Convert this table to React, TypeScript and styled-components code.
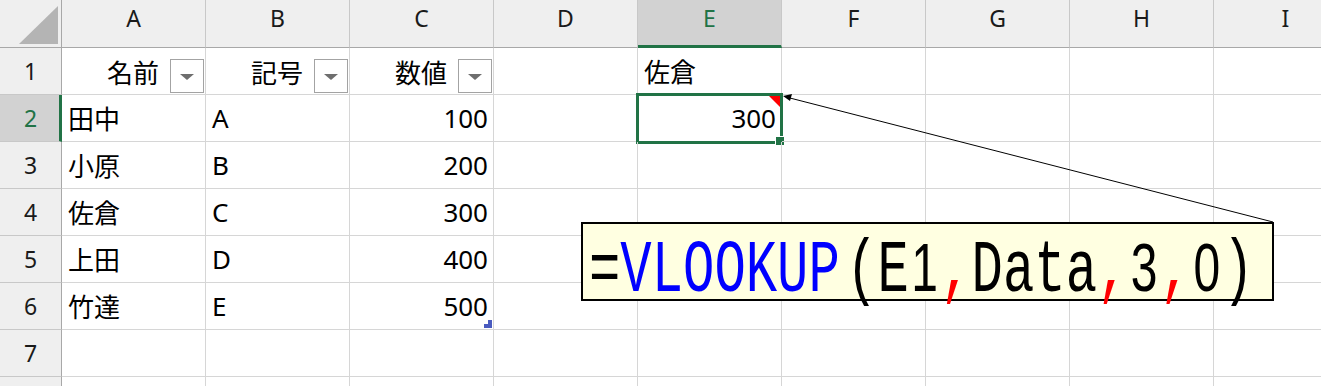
import React from "react";
import styled, { createGlobalStyle, css } from "styled-components";

const GREEN = "#217346";
const GRID = "#d6d6d6";

const GlobalStyle = createGlobalStyle`
  html, body { margin: 0; padding: 0; background: #fff; overflow: hidden; }
  body { font-family: "Noto Sans", "Noto Sans CJK JP", sans-serif; }
`;

const Page = styled.div`
  position: relative;
  width: 1321px;
  height: 386px;
  overflow: hidden;
  background: #fff;
`;

const Sheet = styled.div`
  display: grid;
  grid-template-columns: 62px repeat(9, 144px);
  grid-template-rows: 48px repeat(8, 47px);
`;

const HeaderBase = css`
  box-sizing: border-box;
  background: #efefef;
  display: flex;
  align-items: center;
  justify-content: center;
  font-family: "Noto Sans", "Noto Sans CJK JP", sans-serif;
  font-size: 23px;
  color: #1a1a1a;
`;

const Corner = styled.div`
  ${HeaderBase};
  position: relative;
  border-right: 1px solid #a8a8a8;
  border-bottom: 1px solid #a8a8a8;
`;

const CornerTriangle = styled.svg`
  position: absolute;
  left: 19px;
  top: 6px;
`;

const ColHeader = styled.div<{ $active?: boolean }>`
  ${HeaderBase};
  border-right: 1px solid #c8c8c8;
  border-bottom: ${(p) => (p.$active ? `3px solid ${GREEN}` : "1px solid #a8a8a8")};
  background: ${(p) => (p.$active ? "#d2d2d2" : "#efefef")};
  color: ${(p) => (p.$active ? GREEN : "#1a1a1a")};
  padding-top: ${(p) => (p.$active ? "2px" : "0")};
  padding-bottom: 12px;
`;

const RowHeader = styled.div<{ $active?: boolean }>`
  ${HeaderBase};
  border-bottom: 1px solid #c8c8c8;
  border-right: ${(p) => (p.$active ? `3px solid ${GREEN}` : "1px solid #a8a8a8")};
  background: ${(p) => (p.$active ? "#d2d2d2" : "#efefef")};
  color: ${(p) => (p.$active ? GREEN : "#1a1a1a")};
  padding-left: ${(p) => (p.$active ? "2px" : "0")};
`;

const Cell = styled.div<{ $align?: "left" | "right" }>`
  position: relative;
  box-sizing: border-box;
  border-right: 1px solid ${GRID};
  border-bottom: 1px solid ${GRID};
  display: flex;
  align-items: center;
  justify-content: ${(p) => (p.$align === "right" ? "flex-end" : "flex-start")};
  padding: 0 5px 0 6px;
  font-family: "Noto Sans", "Noto Sans CJK JP", sans-serif;
  font-size: 26px;
  color: #000;
  white-space: nowrap;
`;

const HeadCell = styled(Cell)`
  gap: 11px;
  padding-right: 1px;
  padding-top: 2px;
`;

const FilterButton = styled.span`
  box-sizing: border-box;
  width: 34px;
  height: 34px;
  border: 1px solid #a3a3a3;
  background: #fff;
  display: flex;
  align-items: center;
  justify-content: center;
  margin-top: 8px;
  padding-top: 2px;
`;

const FilterArrow = styled.span`
  width: 0;
  height: 0;
  border-left: 7px solid transparent;
  border-right: 7px solid transparent;
  border-top: 6px solid #6e6e6e;
`;

const SelectionFrame = styled.div`
  position: absolute;
  left: -2px;
  top: -2px;
  right: -2px;
  bottom: -3px;
  border: 3px solid ${GREEN};
  pointer-events: none;
`;

const FillHandle = styled.div`
  position: absolute;
  right: -3px;
  bottom: -4px;
  width: 8px;
  height: 8px;
  background: ${GREEN};
  outline: 1px solid #fff;
`;

const CommentMark = styled.svg`
  position: absolute;
  right: 1px;
  top: 1px;
`;

const TableHandle = styled.svg`
  position: absolute;
  right: 1px;
  bottom: 1px;
`;

const Connector = styled.svg`
  position: absolute;
  left: 0;
  top: 0;
  pointer-events: none;
`;

const CommentBox = styled.div`
  position: absolute;
  left: 581px;
  top: 222px;
  width: 693px;
  height: 79px;
  box-sizing: border-box;
  border: 2px solid #000;
  background: #ffffe1;
  padding: 13px 0 0 6px;
`;

const Formula = styled.span`
  display: inline-block;
  font-family: "Liberation Mono", "DejaVu Sans Mono", monospace;
  font-size: 74px;
  line-height: 60px;
  color: #000;
  white-space: pre;
  transform: scaleX(0.706);
  transform-origin: left center;
`;

const Fn = styled.span`
  color: #0000ff;
`;

const Paren = styled.span`
  margin-left: 9px;
`;

const Digit = styled.span`
  display: inline-block;
  width: 44.4px;
  text-align: center;
  font-family: "Liberation Sans", "Noto Sans", sans-serif;
  font-size: 68px;
`;

const Sep = styled.span`
  color: #ff0000;
`;

const COLS = ["A", "B", "C", "D", "E", "F", "G", "H", "I"];

type Row = { a: string; b: string; c: string };
const rows: Row[] = [
  { a: "田中", b: "A", c: "100" },
  { a: "小原", b: "B", c: "200" },
  { a: "佐倉", b: "C", c: "300" },
  { a: "上田", b: "D", c: "400" },
  { a: "竹達", b: "E", c: "500" },
];

const Filter = () => (
  <FilterButton>
    <FilterArrow />
  </FilterButton>
);

export default function App() {
  return (
    <Page>
      <GlobalStyle />
      <Sheet>
        <Corner>
          <CornerTriangle width="40" height="38" viewBox="0 0 40 38">
            <polygon points="0,38 39,38 39,0" fill="#b4b4b4" />
          </CornerTriangle>
        </Corner>
        {COLS.map((c) => (
          <ColHeader key={c} $active={c === "E"}>
            {c}
          </ColHeader>
        ))}

        <RowHeader>1</RowHeader>
        <HeadCell $align="right">
          名前
          <Filter />
        </HeadCell>
        <HeadCell $align="right">
          記号
          <Filter />
        </HeadCell>
        <HeadCell $align="right">
          数値
          <Filter />
        </HeadCell>
        <Cell />
        <Cell>佐倉</Cell>
        <Cell />
        <Cell />
        <Cell />
        <Cell />

        {rows.map((r, i) => {
          const n = i + 2;
          return (
            <React.Fragment key={n}>
              <RowHeader $active={n === 2}>{n}</RowHeader>
              <Cell>{r.a}</Cell>
              <Cell>{r.b}</Cell>
              <Cell $align="right">
                {r.c}
                {n === 6 && (
                  <TableHandle width="8" height="8" viewBox="0 0 8 8">
                    <polygon points="4,0 8,0 8,8 0,8 0,4 4,4" fill="#4a5bbf" />
                  </TableHandle>
                )}
              </Cell>
              <Cell />
              {n === 2 ? (
                <Cell $align="right">
                  300
                  <CommentMark width="11" height="11" viewBox="0 0 11 11">
                    <polygon points="0,0 11,0 11,11" fill="#ff0000" />
                  </CommentMark>
                  <SelectionFrame />
                  <FillHandle />
                </Cell>
              ) : (
                <Cell />
              )}
              <Cell />
              <Cell />
              <Cell />
              <Cell />
            </React.Fragment>
          );
        })}

        {[7, 8].map((n) => (
          <React.Fragment key={n}>
            <RowHeader>{n === 7 ? n : ""}</RowHeader>
            {COLS.map((c) => (
              <Cell key={c} />
            ))}
          </React.Fragment>
        ))}
      </Sheet>

      <Connector width="1321" height="386" viewBox="0 0 1321 386">
        <line x1="786" y1="97" x2="1273" y2="222" stroke="#000" strokeWidth="1" />
        <polygon points="783,96 792,94 790,101" fill="#000" />
      </Connector>

      <CommentBox>
        <Formula>
          =<Fn>VLOOKUP</Fn>
          <Paren>(</Paren>E<Digit>1</Digit>
          <Sep>,</Sep>Data<Sep>,</Sep>
          <Digit>3</Digit>
          <Sep>,</Sep>
          <Digit>0</Digit>)
        </Formula>
      </CommentBox>
    </Page>
  );
}
